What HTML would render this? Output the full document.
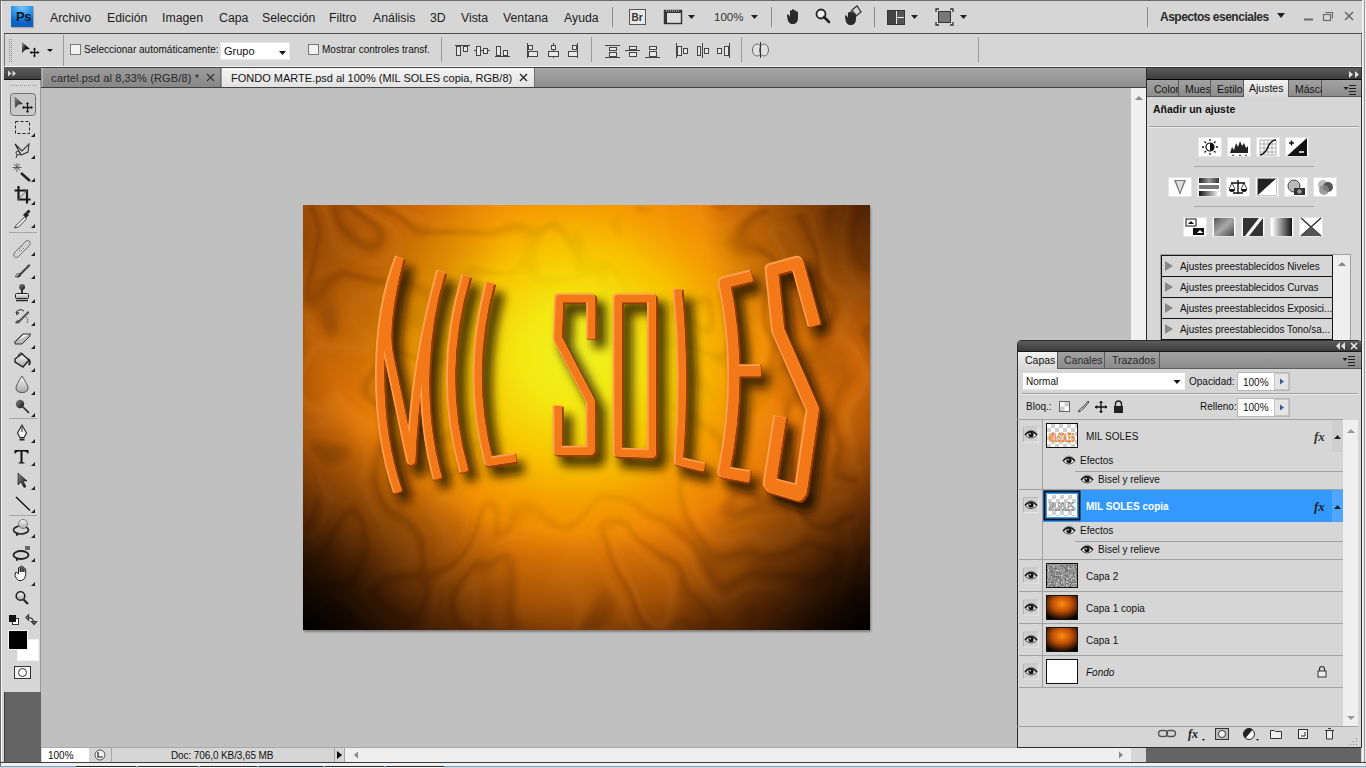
<!DOCTYPE html>
<html><head><meta charset="utf-8">
<style>
*{margin:0;padding:0;box-sizing:border-box}
html,body{width:1366px;height:768px;overflow:hidden;background:#d6d6d6;font-family:"Liberation Sans",sans-serif;color:#111}
.a{position:absolute}
.t{position:absolute;white-space:nowrap}
</style></head><body>
<div class="a" style="left:0;top:0;width:1366px;height:768px;background:#d6d6d6;border-top:1px solid #6c6c6c"></div>

<!-- MENU BAR -->
<div class="a" style="left:11px;top:6px;width:22px;height:21px;background:radial-gradient(ellipse 90% 70% at 50% 10%,#70c4fc,#2a90ec 55%,#0a62c4);box-shadow:1px 1px 1px rgba(90,60,40,.3)"></div>
<div class="t" style="left:16px;top:9px;font-size:13px;line-height:16px;font-weight:bold;color:#1a1418;letter-spacing:-0.5px">Ps</div>
<div class="t" style="left:50px;top:11px;font-size:12.3px;line-height:15px;color:#1e1e1e">Archivo</div>
<div class="t" style="left:107px;top:11px;font-size:12.3px;line-height:15px;color:#1e1e1e">Edición</div>
<div class="t" style="left:162px;top:11px;font-size:12.3px;line-height:15px;color:#1e1e1e">Imagen</div>
<div class="t" style="left:219px;top:11px;font-size:12.3px;line-height:15px;color:#1e1e1e">Capa</div>
<div class="t" style="left:262px;top:11px;font-size:12.3px;line-height:15px;color:#1e1e1e">Selección</div>
<div class="t" style="left:329px;top:11px;font-size:12.3px;line-height:15px;color:#1e1e1e">Filtro</div>
<div class="t" style="left:373px;top:11px;font-size:12.3px;line-height:15px;color:#1e1e1e">Análisis</div>
<div class="t" style="left:430px;top:11px;font-size:12.3px;line-height:15px;color:#1e1e1e">3D</div>
<div class="t" style="left:461px;top:11px;font-size:12.3px;line-height:15px;color:#1e1e1e">Vista</div>
<div class="t" style="left:503px;top:11px;font-size:12.3px;line-height:15px;color:#1e1e1e">Ventana</div>
<div class="t" style="left:564px;top:11px;font-size:12.3px;line-height:15px;color:#1e1e1e">Ayuda</div>

<svg class="a" style="left:600px;top:0" width="766" height="33" viewBox="600 0 766 33">
 <g fill="none" stroke="#8a8a8a"><path d="M612.5,7V27M771.5,7V27M874.5,7V27M1147.5,7V27"/></g>
 <rect x="629.5" y="9.5" width="16" height="15" fill="#e8e8e8" stroke="#555"/>
 <text x="631.5" y="21" font-family="Liberation Sans" font-size="10" font-weight="bold" fill="#333">Br</text>
 <rect x="664.5" y="10.5" width="17" height="13" fill="#ddd" stroke="#333" stroke-width="1.4"/>
 <path d="M664,10h18v3h-18z" fill="#333"/><path d="M664,10v14h3v-14z" fill="#333"/>
 <path d="M666,11h1M668,11h1M670,11h1M672,11h1M674,11h1M676,11h1M678,11h1" stroke="#ddd"/>
 <path d="M688,15h7l-3.5,4z" fill="#222"/>
 <text x="714" y="21" font-family="Liberation Sans" font-size="11.5" fill="#333">100%</text>
 <path d="M751,15h7l-3.5,4z" fill="#222"/>
 <path d="M787,16 q0,-3 2,-1 l1,2 v-6 q1,-2 2,0 v4 v-5 q1,-2 2,0 v5 v-4 q1,-2 2,0 v4 v-3 q1,-1.5 2,0 v6 q0,5 -4,6 h-3 q-2,-1 -3,-3 z" fill="#2a2a2a"/>
 <circle cx="821" cy="14" r="4.5" fill="#eee" stroke="#222" stroke-width="1.8"/>
 <path d="M824,17l5,5" stroke="#222" stroke-width="2.6" stroke-linecap="round"/>
 <path d="M845,17 q0,-3 2,-1 l1,2 v-5 q1,-2 2,0 v3 v-4 q1,-2 2,0 v4 v-3 q1,-2 2,0 v3 v-2 q1,-1.5 2,0 v5 q0,5 -4,6 h-3 q-2,-1 -3,-3 z" fill="#2a2a2a"/>
 <path d="M852,10 l5,-4 l4,6 l-5,4 z" fill="none" stroke="#333" stroke-width="1.2"/>
 <rect x="887.5" y="10.5" width="17" height="14" fill="#eee" stroke="#333"/>
 <rect x="888" y="11" width="8" height="13" fill="#444"/><rect x="897" y="11" width="7" height="6" fill="#555"/><rect x="897" y="18" width="7" height="6" fill="#555"/>
 <path d="M911,15h7l-3.5,4z" fill="#222"/>
 <path d="M936,12v-3h3M950,9h3v3M953,22v3h-3M939,25h-3v-3" fill="none" stroke="#333" stroke-width="1.3"/>
 <rect x="938.5" y="11.5" width="12" height="11" fill="#777" stroke="#333"/>
 <path d="M960,15h7l-3.5,4z" fill="#222"/>
 <path d="M1277,13h8l-4,5z" fill="#222"/>
 <path d="M1304,19.5h9" stroke="#6a6a6a" stroke-width="2"/>
 <rect x="1323.5" y="14.5" width="7" height="6" fill="none" stroke="#6a6a6a" stroke-width="1.2"/><path d="M1325.5,12.5h7v6" fill="none" stroke="#6a6a6a" stroke-width="1.2"/>
 <path d="M1345,12l8,8M1353,12l-8,8" stroke="#6a6a6a" stroke-width="1.6"/>
</svg>
<div class="t" style="left:1160px;top:10px;font-size:12px;line-height:15px;font-weight:bold;color:#2a2a2a;letter-spacing:-0.5px">Aspectos esenciales</div>

<!-- OPTION BAR -->
<div class="a" style="left:4px;top:33px;width:1358px;height:34px;border-top:1px solid #4a4a4a;border-left:1px solid #7a7a7a;border-right:1px solid #7a7a7a;border-bottom:1px solid #f4f4f4;background:#d6d6d6"></div>
<svg class="a" style="left:0;top:33px" width="1366" height="34" viewBox="0 33 1366 34">
 <g fill="#909090"><rect x="9" y="39" width="1" height="1"/><rect x="11" y="39" width="1" height="1"/><rect x="9" y="41" width="1" height="1"/><rect x="11" y="41" width="1" height="1"/><rect x="9" y="43" width="1" height="1"/><rect x="11" y="43" width="1" height="1"/><rect x="9" y="45" width="1" height="1"/><rect x="11" y="45" width="1" height="1"/><rect x="9" y="47" width="1" height="1"/><rect x="11" y="47" width="1" height="1"/><rect x="9" y="49" width="1" height="1"/><rect x="11" y="49" width="1" height="1"/><rect x="9" y="51" width="1" height="1"/><rect x="11" y="51" width="1" height="1"/><rect x="9" y="53" width="1" height="1"/><rect x="11" y="53" width="1" height="1"/><rect x="9" y="55" width="1" height="1"/><rect x="11" y="55" width="1" height="1"/><rect x="9" y="57" width="1" height="1"/><rect x="11" y="57" width="1" height="1"/><rect x="9" y="59" width="1" height="1"/><rect x="11" y="59" width="1" height="1"/><rect x="9" y="61" width="1" height="1"/><rect x="11" y="61" width="1" height="1"/></g>
 <defs><linearGradient id="mvg" x1="0" y1="0" x2="1" y2="0.6"><stop offset="0" stop-color="#999"/><stop offset="0.6" stop-color="#111"/></linearGradient></defs>
 <path d="M22,42 L30,49 L25.5,49.5 L22,53 Z" fill="url(#mvg)"/>
 <path d="M34.5,48.5v8M30.5,52.5h8" stroke="#111" stroke-width="1.3"/>
 <path d="M33,49.5l1.5,-2l1.5,2zM33,55.5l1.5,2l1.5,-2zM31.5,51l-2,1.5l2,1.5zM37.5,51l2,1.5l-2,1.5z" fill="#111"/>
 <path d="M47,49h6l-3,3z" fill="#111"/>
 <path d="M63.5,35V66" stroke="#9a9a9a"/>
 <rect x="70.5" y="44.5" width="10" height="10" fill="#f2f2f2" stroke="#777"/>
 <rect x="308.5" y="44.5" width="10" height="10" fill="#f2f2f2" stroke="#777"/>
 <rect x="220.5" y="42.5" width="69" height="17" fill="#fff" stroke="#e6e6e6"/>
 <path d="M279,51h7l-3.5,4z" fill="#111"/>
 <path d="M441.5,37V62M591.5,37V62M741.5,37V62M978.5,37V62" stroke="#9a9a9a"/>
 <g fill="#e8e8e8" stroke="#444" stroke-width="1">
  <path d="M455,45.5h15" /><rect x="456.5" y="46.5" width="4" height="9"/><rect x="463.5" y="46.5" width="4" height="5"/>
  <path d="M474,50.5h16"/><rect x="476.5" y="46.5" width="4" height="9"/><rect x="483.5" y="48.5" width="4" height="5"/>
  <path d="M495,56.5h15"/><rect x="496.5" y="46.5" width="4" height="9"/><rect x="503.5" y="50.5" width="4" height="5"/>
  <path d="M527.5,43v15"/><rect x="528.5" y="45.5" width="4" height="4"/><rect x="528.5" y="51.5" width="9" height="5"/>
  <path d="M553.5,43v15"/><rect x="551.5" y="45.5" width="4" height="4"/><rect x="548.5" y="51.5" width="10" height="5"/>
  <path d="M577.5,43v15"/><rect x="572.5" y="45.5" width="4" height="4"/><rect x="568.5" y="51.5" width="9" height="5"/>
  <path d="M605,45.5h15M605,57.5h15"/><rect x="609.5" y="47.5" width="7" height="3"/><rect x="609.5" y="52.5" width="7" height="4"/>
  <path d="M625,50.5h15"/><rect x="629.5" y="46.5" width="7" height="3"/><rect x="629.5" y="52.5" width="7" height="4"/>
  <path d="M645,57.5h15"/><rect x="649.5" y="46.5" width="7" height="3"/><rect x="649.5" y="51.5" width="7" height="5"/>
  <path d="M676.5,43v15"/><rect x="677.5" y="46.5" width="4" height="9"/><rect x="683.5" y="48.5" width="4" height="5"/>
  <path d="M702.5,43v15"/><rect x="697.5" y="46.5" width="3" height="9"/><rect x="704.5" y="48.5" width="4" height="5"/>
  <path d="M729.5,43v15"/><rect x="724.5" y="46.5" width="4" height="9"/><rect x="717.5" y="48.5" width="4" height="5"/>
 </g>
 <g fill="#e0e0e0" stroke="#666"><ellipse cx="757" cy="50" rx="4.5" ry="6"/><ellipse cx="764" cy="50" rx="4.5" ry="6"/><path d="M760.5,42v16" stroke="#333"/></g>
</svg>
<div class="t" style="left:84px;top:43px;font-size:10px;line-height:13px;color:#111">Seleccionar automáticamente:</div>
<div class="t" style="left:224px;top:45px;font-size:11px;line-height:13px;color:#111">Grupo</div>
<div class="t" style="left:322px;top:43px;font-size:10px;line-height:13px;color:#111">Mostrar controles transf.</div>

<!-- TOOL PANEL -->
<div class="a" style="left:4px;top:67px;width:37px;height:625px;background:#d6d6d6;border-right:1px solid #9a9a9a"></div>
<div class="a" style="left:4px;top:67px;width:37px;height:13px;background:linear-gradient(#5e5e5e,#3e3e3e);border-bottom:1px solid #111"></div>
<div class="a" style="left:4px;top:692px;width:37px;height:70px;background:#646464;border-left:1px solid #3c3c3c"></div>
<svg class="a" style="left:0;top:67px" width="44" height="625" viewBox="0 67 44 625">
 <defs>
  <linearGradient id="tg" x1="0" y1="0" x2="0" y2="1"><stop offset="0" stop-color="#f8f8f8"/><stop offset="1" stop-color="#a8a8a8"/></linearGradient>
  <linearGradient id="tgd" x1="0" y1="0" x2="1" y2="1"><stop offset="0" stop-color="#888"/><stop offset="1" stop-color="#111"/></linearGradient>
 </defs>
 <path d="M8,70.5l3.5,3l-3.5,3zM12.5,70.5l3.5,3l-3.5,3z" fill="#d8d8d8"/>
 <g fill="#9a9a9a"><rect x="10" y="85" width="1" height="1"/><rect x="12" y="85" width="1" height="1"/><rect x="14" y="85" width="1" height="1"/><rect x="16" y="85" width="1" height="1"/><rect x="18" y="85" width="1" height="1"/><rect x="20" y="85" width="1" height="1"/><rect x="22" y="85" width="1" height="1"/><rect x="24" y="85" width="1" height="1"/><rect x="26" y="85" width="1" height="1"/><rect x="28" y="85" width="1" height="1"/><rect x="30" y="85" width="1" height="1"/><rect x="32" y="85" width="1" height="1"/><rect x="34" y="85" width="1" height="1"/><rect x="36" y="85" width="1" height="1"/></g>
 <rect x="10.5" y="93.5" width="25" height="22" rx="3" fill="#c8c8c8" stroke="#707070"/>
 <path d="M14.5,96.5 L23,104 L18.5,104.5 L15,108 Z" fill="url(#tgd)"/>
 <path d="M27.5,103v9M23,107.5h9" stroke="#111" stroke-width="1.3"/>
 <path d="M26,104l1.5,-2l1.5,2zM26,111l1.5,2l1.5,-2zM24,106l-2,1.5l2,1.5zM31,106l2,1.5l-2,1.5z" fill="#111"/>
 <rect x="15.5" y="121.5" width="14" height="12" fill="none" stroke="#222" stroke-dasharray="3,2"/><path d="M31,137h4v-4z" fill="#222"/>
 <path d="M15,144 l7,7 l7,-7 l-1,8 l-7,3 z" fill="none" stroke="#333" stroke-width="1.1"/><circle cx="18" cy="153" r="2" fill="none" stroke="#333"/><path d="M17,155 l-1,3" stroke="#333"/><path d="M31,159h4v-4z" fill="#222"/>
 <path d="M21,173 l9,8" stroke="#222" stroke-width="2.4"/><path d="M17,163v9M12.5,167.5h9M14,164l6,6M20,164l-6,6" stroke="#555" stroke-width="0.9"/><path d="M31,182h4v-4z" fill="#222"/>
 <path d="M18.5,186v13.5h12M14.5,190.5h12.5v13" fill="none" stroke="#1a1a1a" stroke-width="2.2"/><path d="M18,200l10,-11" stroke="#666"/><path d="M31,205h4v-4z" fill="#222"/>
 <path d="M14.5,228 l2,-3 l8,-8 l2,2 l-8,8z" fill="#f0f0f0" stroke="#444" stroke-width="1"/><path d="M23,215 l3,3 l3,-3 l-3,-3z" fill="#222"/><path d="M26,212l2.5,-2.5l2,2l-2.5,2.5z" fill="#222"/><path d="M31,228h4v-4z" fill="#222"/>
 <path d="M9,232.5h28M9,418.5h28M9,515.5h28" stroke="#a6a6a6"/>
 <path d="M15,252 l11,-11 q3,-2 4,1 q1,2 -1,4 l-11,11 q-3,2 -4,-1 q-1,-2 1,-4z" fill="#d0d0d0" stroke="#777" stroke-width="1"/><path d="M19,248l1,1M21,246l1,1M19,250l1,1M23,248l1,1M21,250l1,1" stroke="#888"/><path d="M31,256h4v-4z" fill="#222"/>
 <path d="M15,277 q1,-4 5,-4 l9,-9 l1.5,1.5 l-9,9 q-1,4 -6.5,2.5z" fill="#444"/><path d="M16,276 q2,-1 3,-2" stroke="#ddd"/><path d="M31,279h4v-4z" fill="#222"/>
 <circle cx="22" cy="287" r="3" fill="url(#tgd)"/><path d="M22,289v4" stroke="#333" stroke-width="2"/><rect x="15.5" y="293.5" width="13" height="5" rx="1" fill="url(#tg)" stroke="#222"/><path d="M16,300.5h12" stroke="#222" stroke-width="1.5"/><path d="M31,303h4v-4z" fill="#222"/>
 <path d="M15,323 q1,-3 4,-3 l9,-9 l1.5,1.5 l-9,9 q-1,3 -5.5,1.5z" fill="#555"/><path d="M16,312 q4,-4 8,-1 M16,312 l1,3 l2,-2z" fill="none" stroke="#333" stroke-width="1"/><path d="M26,317 q3,3 1,6" stroke="#333" stroke-dasharray="1.5,1" fill="none"/><path d="M31,326h4v-4z" fill="#222"/>
 <path d="M15,342 l8,-8 h7 l-8,8z" fill="#f4f4f4" stroke="#333" stroke-width="1.1"/><path d="M15,342 v2 h7 l8,-8 v-2" fill="#bbb" stroke="#333" stroke-width="1"/><path d="M31,349h4v-4z" fill="#222"/>
 <path d="M15,359 l7,-5 l7,6 l-6,7 l-8,-5z" fill="url(#tg)" stroke="#222" stroke-width="1.4"/><path d="M18,356 q2,-5 5,-2" fill="none" stroke="#222"/><path d="M28,359 q3,2 1,6" stroke="#222" stroke-width="2" fill="none"/><path d="M31,372h4v-4z" fill="#222"/>
 <path d="M22,376 q-6,9 -6,12 q0,4.5 6,4.5 q6,0 6,-4.5 q0,-3 -6,-12z" fill="url(#tg)" stroke="#555" stroke-width="1"/><path d="M31,395h4v-4z" fill="#222"/>
 <circle cx="20" cy="404" r="4.2" fill="url(#tgd)"/><path d="M23,407 l6,6" stroke="#222" stroke-width="1.6"/><path d="M31,417h4v-4z" fill="#222"/>
 <path d="M22,425 l-4.5,8 l2.5,4.5 h4 l2.5,-4.5z" fill="#f4f4f4" stroke="#222" stroke-width="1.1"/><path d="M22,427v5" stroke="#222"/><path d="M19.5,439.5h5" stroke="#222" stroke-width="2"/><path d="M31,443h4v-4z" fill="#222"/>
 <path d="M14.5,450h14v3.5h-1q-1,-2 -3,-2h-2v10.5l2,0.8v0.7h-6v-0.7l2,-0.8v-10.5h-2q-2,0 -3,2h-1z" fill="#111"/><path d="M31,466h4v-4z" fill="#222"/>
 <path d="M18,473 l0,12 l3,-3 l3,5.5 l2,-1 l-3,-5.5 l4,0z" fill="url(#tgd)" stroke="#111" stroke-width="0.6"/><path d="M31,490h4v-4z" fill="#222"/>
 <path d="M16,497 l14,13.5" stroke="#111" stroke-width="1.4"/><path d="M31,513h4v-4z" fill="#222"/>
 <ellipse cx="21" cy="530" rx="7.5" ry="4" fill="none" stroke="#222" stroke-width="1.6"/><circle cx="23" cy="524" r="4.5" fill="url(#tg)" stroke="#666" stroke-width="0.8"/><path d="M16,533l3,2l-3,1z" fill="#222"/><path d="M31,538h4v-4z" fill="#222"/>
 <ellipse cx="21" cy="555" rx="7.5" ry="4" fill="none" stroke="#222" stroke-width="1.8"/><rect x="25" y="546" width="5" height="4" fill="#666"/><path d="M16,558l3,2l-3,1z" fill="#222"/><path d="M31,562h4v-4z" fill="#222"/>
 <path d="M15.5,575 q-1,-3 1,-3 l2,2 v-6 q0.5,-1.5 1.8,0 v4 v-5.5 q0.6,-1.5 1.8,0 v5.5 v-4.5 q0.6,-1.5 1.8,0 v4.5 v-3 q0.6,-1.3 1.8,0 v5.5 q0,5 -4,6 h-3 q-2,-1 -4,-5 z" fill="#f8f8f8" stroke="#222" stroke-width="1"/><path d="M31,586h4v-4z" fill="#222"/>
 <circle cx="20.5" cy="596" r="4.3" fill="url(#tg)" stroke="#222" stroke-width="1.6"/><path d="M23.5,599.5l4.5,4.5" stroke="#222" stroke-width="2.2"/>
 <rect x="12.5" y="618.5" width="6" height="6" fill="#fff" stroke="#333"/><rect x="9" y="615" width="7" height="7" fill="#111"/>
 <path d="M28,617.5 q5,0 6,5 M26,617.5 l2.5,-2.5 v5z M36.5,621.5 l-2.5,3 l-2.5,-3z" fill="none" stroke="#333" stroke-width="1.2"/>
 <rect x="17.5" y="639.5" width="21" height="21" fill="#fff" stroke="#f0f0f0"/>
 <rect x="8.5" y="630.5" width="19" height="19" fill="#000" stroke="#f4f4f4"/>
 <rect x="14.5" y="666.5" width="16" height="12" fill="#f4f4f4" stroke="#333"/><circle cx="22.5" cy="672.5" r="4" fill="#fff" stroke="#333"/>
</svg>

<!-- TAB BAR -->
<div class="a" style="left:41px;top:67px;width:1106px;height:21px;background:linear-gradient(#a6a6a6,#8e8e8e);border-top:1px solid #404040;border-bottom:1px solid #404040"></div>
<div class="a" style="left:42px;top:68px;width:179px;height:19px;background:linear-gradient(#9c9c9c,#878787);border-right:1px solid #707070;border-left:1px solid #b0b0b0"></div>
<div class="t" style="left:51px;top:72px;font-size:11px;line-height:13px;color:#262626;letter-spacing:0.13px">cartel.psd al 8,33% (RGB/8) *</div>
<svg class="a" style="left:205px;top:72px" width="12" height="12"><path d="M2,2l7,7M9,2l-7,7" stroke="#333" stroke-width="1.1"/></svg>
<div class="a" style="left:222px;top:68px;width:313px;height:19px;background:linear-gradient(#f4f4f4,#e2e2e2);border-right:1px solid #707070"></div>
<div class="t" style="left:231px;top:72px;font-size:11px;line-height:13px;color:#111">FONDO MARTE.psd al 100% (MIL SOLES copia, RGB/8)</div>
<svg class="a" style="left:518px;top:72px" width="12" height="12"><path d="M2,2l7,7M9,2l-7,7" stroke="#222" stroke-width="1.3"/></svg>

<!-- CANVAS -->
<div class="a" style="left:41px;top:88px;width:1090px;height:659px;background:#c0c0c0"></div>
<div class="a" style="left:1131px;top:88px;width:16px;height:659px;background:#f0f0f0;border-right:1px solid #3c3c3c"></div>
<svg class="a" style="left:1131px;top:88px" width="16" height="20"><path d="M4,12h8l-4,-4z" fill="#888"/></svg>

<!-- IMAGE -->
<div class="a" style="left:303px;top:205px;width:567px;height:425px;box-shadow:1px 2px 2px rgba(0,0,0,.35)"></div>
<svg class="a" style="left:303px;top:205px" width="567" height="425" viewBox="0 0 567 425">
<defs>
<radialGradient id="g1" gradientUnits="userSpaceOnUse" cx="272" cy="150" r="300" gradientTransform="translate(272 150) scale(1.12 1.05) translate(-272 -150)">
<stop offset="0" stop-color="#f0f020"/>
<stop offset="0.16" stop-color="#f4e810"/>
<stop offset="0.34" stop-color="#f8c400"/>
<stop offset="0.48" stop-color="#f49c00"/>
<stop offset="0.65" stop-color="#ea7c06"/>
<stop offset="0.85" stop-color="#d86c08"/>
<stop offset="1" stop-color="#c86008"/>
</radialGradient>
<radialGradient id="g2" gradientUnits="userSpaceOnUse" cx="283" cy="40" r="480">
<stop offset="0" stop-color="#000" stop-opacity="0"/>
<stop offset="0.6" stop-color="#000" stop-opacity="0"/>
<stop offset="0.75" stop-color="#140600" stop-opacity="0.28"/>
<stop offset="0.87" stop-color="#080000" stop-opacity="0.62"/>
<stop offset="1" stop-color="#000" stop-opacity="1"/>
</radialGradient>
<radialGradient id="mg" gradientUnits="userSpaceOnUse" cx="268" cy="170" r="330">
<stop offset="0.25" stop-color="#fff" stop-opacity="0"/>
<stop offset="0.7" stop-color="#fff" stop-opacity="1"/>
</radialGradient>
<radialGradient id="g3" gradientUnits="userSpaceOnUse" cx="567" cy="0" r="170">
<stop offset="0" stop-color="#1a0800" stop-opacity="0.7"/>
<stop offset="1" stop-color="#1a0800" stop-opacity="0"/>
</radialGradient>
<radialGradient id="g4" gradientUnits="userSpaceOnUse" cx="0" cy="40" r="200">
<stop offset="0" stop-color="#1a0800" stop-opacity="0.35"/>
<stop offset="1" stop-color="#1a0800" stop-opacity="0"/>
</radialGradient>
<radialGradient id="g5" gradientUnits="userSpaceOnUse" cx="0" cy="425" r="220">
<stop offset="0" stop-color="#000" stop-opacity="0.8"/>
<stop offset="0.5" stop-color="#0a0200" stop-opacity="0.32"/>
<stop offset="1" stop-color="#0a0200" stop-opacity="0"/>
</radialGradient>
<radialGradient id="g6" gradientUnits="userSpaceOnUse" cx="567" cy="425" r="200">
<stop offset="0" stop-color="#000" stop-opacity="0.8"/>
<stop offset="0.5" stop-color="#0a0200" stop-opacity="0.32"/>
<stop offset="1" stop-color="#0a0200" stop-opacity="0"/>
</radialGradient>
<mask id="mm"><rect width="567" height="425" fill="url(#mg)"/></mask>
<filter id="marble" x="0" y="0" width="100%" height="100%" color-interpolation-filters="sRGB">
<feTurbulence type="fractalNoise" baseFrequency="0.011 0.009" numOctaves="2" seed="5" result="n"/>
<feDisplacementMap in="n" in2="n" scale="70" xChannelSelector="G" yChannelSelector="B" result="d"/>
<feComponentTransfer in="d" result="b">
<feFuncR type="table" tableValues="0 1 0 0 0 0 1 0 0 0 0 1 0 0 0 0 1 0 0 0 0 1 0"/>
</feComponentTransfer>
<feColorMatrix in="b" type="matrix" values="0 0 0 0 1  0 0 0 0 0.62  0 0 0 0 0.2  1 0 0 0 0"/>
<feGaussianBlur stdDeviation="0.7"/>
</filter>
<filter id="marble2" x="0" y="0" width="100%" height="100%" color-interpolation-filters="sRGB">
<feTurbulence type="fractalNoise" baseFrequency="0.011 0.009" numOctaves="2" seed="5" result="n"/>
<feDisplacementMap in="n" in2="n" scale="70" xChannelSelector="G" yChannelSelector="B" result="d"/>
<feComponentTransfer in="d" result="b">
<feFuncR type="table" tableValues="0 0 0 1 0 0 0 0 1 0 0 0 0 1 0 0 0 0 1 0 0 0 0"/>
</feComponentTransfer>
<feColorMatrix in="b" type="matrix" values="0 0 0 0 0.25  0 0 0 0 0.1  0 0 0 0 0  1 0 0 0 0"/>
<feGaussianBlur stdDeviation="1.5"/>
</filter>
<filter id="sh" x="-20%" y="-20%" width="140%" height="140%"><feGaussianBlur stdDeviation="5"/></filter>
</defs>
<rect width="567" height="425" fill="url(#g1)"/><g mask="url(#mm)"><rect width="567" height="425" filter="url(#marble2)" opacity="0.22"/><rect width="567" height="425" filter="url(#marble)" opacity="0.2"/></g><rect width="567" height="425" fill="url(#g2)"/><rect width="567" height="425" fill="url(#g3)"/><rect width="567" height="425" fill="url(#g4)"/><rect width="567" height="425" fill="url(#g5)"/><rect width="567" height="425" fill="url(#g6)"/>
<g id="letters" fill="none" stroke-linecap="butt" stroke-linejoin="round">
<g transform="translate(8,9)" stroke="#201000" stroke-opacity="0.8" filter="url(#sh)">
 <path stroke-width="13" d="M95.2,287.4 C72,220 70,120 97,53 M97,53 Q80,120 86,150 L108.5,256 L108.5,256 Q112,160 138.4,67 M138.4,67 C122,120 114,200 135,274"/>
 <path stroke-width="13" d="M163.5,71 Q134,170 161.5,267"/>
 <path stroke-width="13" d="M187.5,78 Q163,168 186,257 L213,253"/>
 <path stroke-width="13" d="M288.5,133.9 L288.5,93.5 L256.5,93.5 L255,134 L288,196.8 L288,246 L255,246 L255,201"/>
 <path stroke-width="13" d="M315,93.5 L349.3,93.5 L349.3,249 L315,247.7 Z"/>
 <path stroke-width="13" d="M374.8,84.5 Q383,170 376,256.7 L401.7,262.7"/>
 <path stroke-width="16" d="M449,71 L421.5,78 Q441,170 421,267.5 L447,272 M431.6,166 L458,166"/>
 <path stroke-width="17" d="M511.8,120.7 L494.5,58 L469,65 L475.4,126 L510,205 L498,287 L467,279 L477.5,212"/>
 <path stroke-width="17" d="M469,282 L496,290" stroke-linecap="round"/>
</g>
<g stroke="#9a3c00" transform="translate(0.8,0.8)">
 <path stroke-width="10" d="M95.2,287.4 C72,220 70,120 97,53 M97,53 Q80,120 86,150 L108.5,256 L108.5,256 Q112,160 138.4,67 M138.4,67 C122,120 114,200 135,274"/>
 <path stroke-width="10" d="M163.5,71 Q134,170 161.5,267"/>
 <path stroke-width="10" d="M187.5,78 Q163,168 186,257 L213,253"/>
 <path stroke-width="10" d="M288.5,133.9 L288.5,93.5 L256.5,93.5 L255,134 L288,196.8 L288,246 L255,246 L255,201"/>
 <path stroke-width="10" d="M315,93.5 L349.3,93.5 L349.3,249 L315,247.7 Z"/>
 <path stroke-width="10" d="M374.8,84.5 Q383,170 376,256.7 L401.7,262.7"/>
 <path stroke-width="13" d="M449,71 L421.5,78 Q441,170 421,267.5 L447,272 M431.6,166 L458,166"/>
 <path stroke-width="14" d="M511.8,120.7 L494.5,58 L469,65 L475.4,126 L510,205 L498,287 L467,279 L477.5,212"/>
 <path stroke-width="14" d="M469,282 L496,290" stroke-linecap="round"/>
</g>
<g stroke="#ffa050" transform="translate(-0.8,-0.8)">
 <path stroke-width="9" d="M95.2,287.4 C72,220 70,120 97,53 M97,53 Q80,120 86,150 L108.5,256 L108.5,256 Q112,160 138.4,67 M138.4,67 C122,120 114,200 135,274"/>
 <path stroke-width="9" d="M163.5,71 Q134,170 161.5,267"/>
 <path stroke-width="9" d="M187.5,78 Q163,168 186,257 L213,253"/>
 <path stroke-width="9" d="M288.5,133.9 L288.5,93.5 L256.5,93.5 L255,134 L288,196.8 L288,246 L255,246 L255,201"/>
 <path stroke-width="9" d="M315,93.5 L349.3,93.5 L349.3,249 L315,247.7 Z"/>
 <path stroke-width="9" d="M374.8,84.5 Q383,170 376,256.7 L401.7,262.7"/>
 <path stroke-width="12" d="M449,71 L421.5,78 Q441,170 421,267.5 L447,272 M431.6,166 L458,166"/>
 <path stroke-width="13" d="M511.8,120.7 L494.5,58 L469,65 L475.4,126 L510,205 L498,287 L467,279 L477.5,212"/>
 <path stroke-width="13" d="M469,282 L496,290" stroke-linecap="round"/>
</g>
<g stroke="#f27818">
 <path stroke-width="7" d="M95.2,287.4 C72,220 70,120 97,53 M97,53 Q80,120 86,150 L108.5,256 L108.5,256 Q112,160 138.4,67 M138.4,67 C122,120 114,200 135,274"/>
 <path stroke-width="7" d="M163.5,71 Q134,170 161.5,267"/>
 <path stroke-width="7" d="M187.5,78 Q163,168 186,257 L213,253"/>
 <path stroke-width="7" d="M288.5,133.9 L288.5,93.5 L256.5,93.5 L255,134 L288,196.8 L288,246 L255,246 L255,201"/>
 <path stroke-width="7" d="M315,93.5 L349.3,93.5 L349.3,249 L315,247.7 Z"/>
 <path stroke-width="7" d="M374.8,84.5 Q383,170 376,256.7 L401.7,262.7"/>
 <path stroke-width="10" d="M449,71 L421.5,78 Q441,170 421,267.5 L447,272 M431.6,166 L458,166"/>
 <path stroke-width="11" d="M511.8,120.7 L494.5,58 L469,65 L475.4,126 L510,205 L498,287 L467,279 L477.5,212"/>
 <path stroke-width="11" d="M469,282 L496,290" stroke-linecap="round"/>
</g>
</g>
</svg>

<!-- STATUS BAR -->
<div class="a" style="left:41px;top:747px;width:1105px;height:15px;background:#d6d6d6;border-top:1px solid #a8a8a8"></div>
<div class="a" style="left:42px;top:748px;width:47px;height:14px;background:#fff"></div>
<div class="t" style="left:48px;top:750px;font-size:10px;line-height:12px">100%</div>
<svg class="a" style="left:89px;top:748px" width="260" height="14">
 <path d="M22.5,0v14" stroke="#a8a8a8"/>
 <circle cx="11" cy="7" r="5" fill="#eee" stroke="#555"/><path d="M9,4v5h5" fill="none" stroke="#222" stroke-width="1.2"/>
 <path d="M245.5,0v14" stroke="#a8a8a8"/>
 <path d="M248,3v8l5,-4z" fill="#000"/>
 <path d="M255.5,0v14" stroke="#a8a8a8"/>
</svg>
<div class="t" style="left:171px;top:750px;font-size:10px;line-height:12px;letter-spacing:-0.1px">Doc: 706,0 KB/3,65 MB</div>
<div class="a" style="left:345px;top:748px;width:786px;height:14px;background:#efefef"></div>
<svg class="a" style="left:345px;top:748px" width="786" height="14"><path d="M13,3.5v7l-4,-3.5z" fill="#888"/><path d="M774,3.5v7l4,-3.5z" fill="#888"/></svg>
<div class="a" style="left:1131px;top:748px;width:15px;height:14px;background:#d6d6d6"></div>
<div class="a" style="left:1146px;top:747px;width:215px;height:15px;background:#646464"></div>

<!-- RIGHT PANEL (Ajustes) -->
<div class="a" style="left:1146px;top:67px;width:216px;height:280px;background:#d6d6d6;border-left:1px solid #2c2c2c;border-right:1px solid #2c2c2c"></div>
<div class="a" style="left:1147px;top:67px;width:214px;height:13px;background:linear-gradient(#5c5c5c,#3c3c3c);border-top:1px solid #303030;border-bottom:1px solid #000"></div>
<svg class="a" style="left:1345px;top:68px" width="18" height="12"><path d="M4,3l4,3.5l-4,3.5zM10,3l4,3.5l-4,3.5z" fill="#e0e0e0"/></svg>
<div class="a" style="left:1147px;top:80px;width:214px;height:17px;background:linear-gradient(#a2a2a2,#8c8c8c);border-bottom:1px solid #5c5c5c"></div>
<div class="a" style="left:1178px;top:80px;width:1px;height:17px;background:#5a5a5a"></div>
<div class="a" style="left:1210px;top:80px;width:1px;height:17px;background:#5a5a5a"></div>
<div class="a" style="left:1243px;top:80px;width:1px;height:17px;background:#5a5a5a"></div>
<div class="a" style="left:1288px;top:80px;width:1px;height:17px;background:#5a5a5a"></div>
<div class="a" style="left:1321px;top:80px;width:1px;height:17px;background:#5a5a5a"></div>
<div class="a" style="left:1244px;top:80px;width:44px;height:18px;background:linear-gradient(#f2f2f2,#d6d6d6)"></div>
<div class="t" style="left:1154px;top:83px;font-size:10.5px;line-height:13px;color:#161616;width:24px;overflow:hidden">Color</div>
<div class="t" style="left:1185px;top:83px;font-size:10.5px;line-height:13px;color:#161616;width:25px;overflow:hidden">Muestras</div>
<div class="t" style="left:1217px;top:83px;font-size:10.5px;line-height:13px;color:#161616;width:26px;overflow:hidden">Estilos</div>
<div class="t" style="left:1249px;top:82px;font-size:10.5px;line-height:13px;color:#111">Ajustes</div>
<div class="t" style="left:1295px;top:83px;font-size:10.5px;line-height:13px;color:#161616;width:27px;overflow:hidden">Máscaras</div>
<svg class="a" style="left:1343px;top:81px" width="20" height="16"><path d="M0.5,6h5l-2.5,3z" fill="#222"/><path d="M6,4.5h7M6,7.5h7M6,10.5h7M6,13.5h7" stroke="#222" stroke-width="1.2"/></svg>
<div class="t" style="left:1153px;top:103px;font-size:10.5px;line-height:13px;font-weight:bold;color:#111">Añadir un ajuste</div>
<div class="a" style="left:1149px;top:126px;width:210px;height:2px;background:#a0a0a0;border-bottom:1px solid #ececec"></div>
<div class="a" style="left:1194px;top:166px;width:120px;height:1px;background:#a8a8a8"></div>
<div class="a" style="left:1194px;top:206px;width:120px;height:1px;background:#a8a8a8"></div>
<svg class="a" style="left:0;top:0" width="1366" height="340" viewBox="0 0 1366 340"><g transform="translate(1198,137)"><rect x="0.5" y="0.5" width="23" height="19" fill="#fff" stroke="#e4e4e4"/><g transform="translate(1,0)"><circle cx="11" cy="10" r="4" fill="#fff" stroke="#111" stroke-width="1.2"/><path d="M11,6v8a4,4 0 0 0 0,-8z" fill="#111"/><path d="M11,2v2M11,16v2M3,10h2M17,10h2M5.5,4.5l1.5,1.5M15,14l1.5,1.5M5.5,15.5l1.5,-1.5M15,6l1.5,-1.5" stroke="#111" stroke-width="1.3"/></g></g><g transform="translate(1227,137)"><rect x="0.5" y="0.5" width="23" height="19" fill="#fff" stroke="#e4e4e4"/><g transform="translate(1,0)"><path d="M2,16 l2,-6 l2,3 l2,-7 l2,4 l2,-6 l2,5 l2,-3 l2,5 l2,-2 v7z" fill="#222"/><path d="M4,19l1,-2l1,2zM11,19l1,-2l1,2zM17,19l1,-2l1,2z" fill="#333"/></g></g><g transform="translate(1256,137)"><rect x="0.5" y="0.5" width="23" height="19" fill="#fff" stroke="#e4e4e4"/><g transform="translate(1,0)"><path d="M3,3h16v15h-16z M7,3v15M11,3v15M15,3v15M3,7h16M3,11h16M3,15h16" fill="none" stroke="#999" stroke-width="0.8"/><path d="M3,18 q5,-1 8,-8 q3,-7 8,-7" fill="none" stroke="#111" stroke-width="1.5"/></g></g><g transform="translate(1285,137)"><rect x="0.5" y="0.5" width="23" height="19" fill="#fff" stroke="#e4e4e4"/><g transform="translate(1,0)"><path d="M1,19 L21,1 V19Z" fill="#111"/><path d="M3,6h5M5.5,3.5v5" stroke="#111" stroke-width="1.5"/><path d="M13,15h5" stroke="#fff" stroke-width="1.5"/></g></g><g transform="translate(1168,177)"><rect x="0.5" y="0.5" width="23" height="19" fill="#fff" stroke="#e4e4e4"/><g transform="translate(1,0)"><path d="M5,3 L17,3 L11,18z" fill="#777"/><path d="M7,4 L15,4 L11,15z" fill="#ddd"/></g></g><g transform="translate(1197,177)"><rect x="0.5" y="0.5" width="23" height="19" fill="#fff" stroke="#e4e4e4"/><g transform="translate(1,0)"><defs><linearGradient id="gb1"><stop offset="0" stop-color="#222"/><stop offset=".5" stop-color="#999"/><stop offset="1" stop-color="#333"/></linearGradient><linearGradient id="gb2"><stop offset="0" stop-color="#111"/><stop offset="1" stop-color="#fff"/></linearGradient></defs><rect x="1" y="1" width="20" height="5" fill="url(#gb1)"/><rect x="1" y="8" width="20" height="4" fill="#777"/><rect x="1" y="14" width="20" height="5" fill="url(#gb2)"/></g></g><g transform="translate(1226,177)"><rect x="0.5" y="0.5" width="23" height="19" fill="#fff" stroke="#e4e4e4"/><g transform="translate(1,0)"><path d="M11,3v14M4,6h14M6,16h10" stroke="#111" stroke-width="1.4"/><path d="M2,12a3,3 0 0 0 6,0zM14,12a3,3 0 0 0 6,0z" fill="#111"/><path d="M5,6l-3,6M5,6l3,6M17,6l-3,6M17,6l3,6" stroke="#111" stroke-width="0.8"/></g></g><g transform="translate(1255,177)"><rect x="0.5" y="0.5" width="23" height="19" fill="#fff" stroke="#e4e4e4"/><g transform="translate(1,0)"><path d="M1,1 H21 L1,19z" fill="#222"/><path d="M21,1 V19 H1z" fill="#fff"/><rect x="1.5" y="1.5" width="19" height="17" fill="none" stroke="#bbb" stroke-width="0.8"/></g></g><g transform="translate(1284,177)"><rect x="0.5" y="0.5" width="23" height="19" fill="#fff" stroke="#e4e4e4"/><g transform="translate(1,0)"><circle cx="9" cy="9" r="6" fill="#bbb" stroke="#444"/><rect x="9" y="11" width="11" height="7" fill="#333"/><circle cx="14.5" cy="14.5" r="2.3" fill="#999"/></g></g><g transform="translate(1313,177)"><rect x="0.5" y="0.5" width="23" height="19" fill="#fff" stroke="#e4e4e4"/><g transform="translate(1,0)"><circle cx="9" cy="8" r="5" fill="#bbb"/><circle cx="14" cy="10" r="5" fill="#555"/><circle cx="10" cy="13" r="5" fill="#888" fill-opacity=".8"/></g></g><g transform="translate(1183,217)"><rect x="0.5" y="0.5" width="23" height="19" fill="#fff" stroke="#e4e4e4"/><g transform="translate(1,0)"><rect x="2" y="2" width="10" height="7" fill="#fff" stroke="#111"/><path d="M4,7l3,-3l3,3z" fill="#111"/><rect x="9" y="11" width="11" height="7" fill="#111"/><path d="M13,16l3,-3l3,3z" fill="#fff"/></g></g><g transform="translate(1212,217)"><rect x="0.5" y="0.5" width="23" height="19" fill="#fff" stroke="#e4e4e4"/><g transform="translate(1,0)"><defs><linearGradient id="gd1" x1="0" y1="0" x2="1" y2="1"><stop offset="0" stop-color="#555"/><stop offset=".5" stop-color="#aaa"/><stop offset="1" stop-color="#444"/></linearGradient></defs><rect x="1" y="1" width="20" height="18" fill="url(#gd1)"/></g></g><g transform="translate(1241,217)"><rect x="0.5" y="0.5" width="23" height="19" fill="#fff" stroke="#e4e4e4"/><g transform="translate(1,0)"><rect x="1" y="1" width="20" height="18" fill="#333"/><path d="M3,19 L17,1 H21 L7,19z" fill="#fff"/></g></g><g transform="translate(1270,217)"><rect x="0.5" y="0.5" width="23" height="19" fill="#fff" stroke="#e4e4e4"/><g transform="translate(1,0)"><defs><linearGradient id="gd2"><stop offset="0" stop-color="#fff"/><stop offset="1" stop-color="#111"/></linearGradient></defs><rect x="1" y="1" width="20" height="18" fill="url(#gd2)"/></g></g><g transform="translate(1299,217)"><rect x="0.5" y="0.5" width="23" height="19" fill="#fff" stroke="#e4e4e4"/><g transform="translate(1,0)"><path d="M1,1 L21,19 M21,1 L1,19" stroke="#333" stroke-width="1.5"/><path d="M1,19 L11,10 L21,19z" fill="#555"/></g></g>
 <rect x="1160.5" y="254.5" width="190" height="90" fill="#d6d6d6" stroke="#a0a0a0"/>
 <rect x="1333" y="255" width="17" height="88" fill="#efefef"/>
 <path d="M1338,266h8l-4,-4z" fill="#888"/>
</svg>
<div class="a" style="left:1161px;top:255px;width:172px;height:22px;border:1px solid #141414;background:#d6d6d6"></div>
<svg class="a" style="left:1164px;top:260px" width="10" height="12"><path d="M1,1v10l8,-5z" fill="#888"/></svg>
<div class="t" style="left:1180px;top:261px;font-size:10px;line-height:12px;color:#111;letter-spacing:-0.05px">Ajustes preestablecidos Niveles</div>
<div class="a" style="left:1161px;top:276px;width:172px;height:22px;border:1px solid #141414;background:#d6d6d6"></div>
<svg class="a" style="left:1164px;top:281px" width="10" height="12"><path d="M1,1v10l8,-5z" fill="#888"/></svg>
<div class="t" style="left:1180px;top:282px;font-size:10px;line-height:12px;color:#111;letter-spacing:-0.05px">Ajustes preestablecidos Curvas</div>
<div class="a" style="left:1161px;top:297px;width:172px;height:22px;border:1px solid #141414;background:#d6d6d6"></div>
<svg class="a" style="left:1164px;top:302px" width="10" height="12"><path d="M1,1v10l8,-5z" fill="#888"/></svg>
<div class="t" style="left:1180px;top:303px;font-size:10px;line-height:12px;color:#111;letter-spacing:-0.05px">Ajustes preestablecidos Exposici...</div>
<div class="a" style="left:1161px;top:318px;width:172px;height:22px;border:1px solid #141414;background:#d6d6d6"></div>
<svg class="a" style="left:1164px;top:323px" width="10" height="12"><path d="M1,1v10l8,-5z" fill="#888"/></svg>
<div class="t" style="left:1180px;top:324px;font-size:10px;line-height:12px;color:#111;letter-spacing:-0.05px">Ajustes preestablecidos Tono/sa...</div>

<!-- LAYERS PANEL -->
<div class="a" style="left:1017px;top:340px;width:345px;height:408px;background:#d6d6d6;border:1px solid #2c2c2c;border-radius:4px 4px 0 0"></div>
<div class="a" style="left:1018px;top:341px;width:343px;height:11px;background:linear-gradient(#5c5c5c,#3a3a3a);border-radius:3px 3px 0 0;border-bottom:1px solid #1a1a1a"></div>
<svg class="a" style="left:1330px;top:340px" width="32" height="12"><path d="M10,2l-4,4l4,4zM15,2l-4,4l4,4z" fill="#ddd"/><path d="M21,3l6,6M27,3l-6,6" stroke="#eee" stroke-width="1.5"/></svg>
<div class="a" style="left:1018px;top:352px;width:343px;height:17px;background:linear-gradient(#a2a2a2,#8c8c8c);border-bottom:1px solid #5c5c5c"></div>
<div class="a" style="left:1057px;top:352px;width:1px;height:17px;background:#5a5a5a"></div>
<div class="a" style="left:1104px;top:352px;width:1px;height:17px;background:#5a5a5a"></div>
<div class="a" style="left:1159px;top:352px;width:1px;height:17px;background:#5a5a5a"></div>
<div class="a" style="left:1018px;top:352px;width:39px;height:18px;background:linear-gradient(#f2f2f2,#d6d6d6)"></div>
<div class="t" style="left:1025px;top:354px;font-size:10.5px;line-height:13px;color:#111">Capas</div>
<div class="t" style="left:1064px;top:354px;font-size:10.5px;line-height:13px;color:#2a2a2a">Canales</div>
<div class="t" style="left:1112px;top:354px;font-size:10.5px;line-height:13px;color:#2a2a2a">Trazados</div>
<svg class="a" style="left:1342px;top:352px" width="20" height="16"><path d="M0.5,6h5l-2.5,3z" fill="#222"/><path d="M6,4.5h7M6,7.5h7M6,10.5h7M6,13.5h7" stroke="#222" stroke-width="1.2"/></svg>
<div class="a" style="left:1023px;top:373px;width:162px;height:17px;background:#fff;border-bottom:1px solid #e8e8e8"></div>
<div class="t" style="left:1026px;top:375px;font-size:10px;line-height:13px;color:#111">Normal</div>
<svg class="a" style="left:1172px;top:378px" width="12" height="8"><path d="M1.5,2h7l-3.5,4z" fill="#111"/></svg>
<div class="t" style="left:1189px;top:375px;font-size:10px;line-height:13px;color:#111">Opacidad:</div>
<div class="a" style="left:1237px;top:372px;width:53px;height:19px;border:1px solid #b8b8b8"></div><div class="a" style="left:1238px;top:373px;width:36px;height:17px;background:#fff"></div>
<div class="t" style="left:1243px;top:376px;font-size:10px;line-height:13px;color:#111">100%</div>
<div class="a" style="left:1274px;top:373px;width:15px;height:17px;background:#e4e4e4;border:1px solid #c4c4c4"></div>
<svg class="a" style="left:1274px;top:373px" width="15" height="17"><path d="M6,5.5v6l4,-3z" fill="#3a5a9a"/></svg>
<div class="a" style="left:1022px;top:393px;width:336px;height:2px;background:#a0a0a0;border-bottom:1px solid #ececec"></div>
<div class="t" style="left:1026px;top:400px;font-size:10px;line-height:13px;color:#111">Bloq.:</div>
<div class="t" style="left:1200px;top:400px;font-size:10px;line-height:13px;color:#111">Relleno:</div>
<div class="a" style="left:1237px;top:398px;width:53px;height:19px;border:1px solid #b8b8b8"></div><div class="a" style="left:1238px;top:399px;width:36px;height:17px;background:#fff"></div>
<div class="t" style="left:1243px;top:401px;font-size:10px;line-height:13px;color:#111">100%</div>
<div class="a" style="left:1274px;top:399px;width:15px;height:17px;background:#e4e4e4;border:1px solid #c4c4c4"></div>
<svg class="a" style="left:1274px;top:399px" width="15" height="17"><path d="M6,5.5v6l4,-3z" fill="#3a5a9a"/></svg>
<svg class="a" style="left:1017px;top:395px" width="345" height="353" viewBox="1017 395 345 353">
 <g><rect x="1059.5" y="401.5" width="10" height="10" fill="#fff"/><rect x="1064.5" y="401.5" width="5" height="5" fill="#cfcfcf"/><rect x="1059.5" y="406.5" width="5" height="5" fill="#cfcfcf"/></g><rect x="1059.5" y="401.5" width="10" height="10" fill="none" stroke="#666"/>
 <path d="M1078,412 q2,-4 5,-5 l5,-6 l1,1 l-5,6 q-2,3 -6,4z" fill="#ddd" stroke="#444"/>
 <path d="M1101,401v12M1095,407h12" stroke="#111" stroke-width="1.3"/><path d="M1099,403l2,-2l2,2zM1099,411l2,2l2,-2zM1097,405l-2,2l2,2zM1105,405l2,2l-2,2z" fill="#111"/>
 <rect x="1114" y="406" width="9" height="7" fill="#222"/><path d="M1115.5,406v-2a3,3 0 0 1 6,0v2" fill="none" stroke="#222" stroke-width="1.4"/>
 <path d="M1017,419.5h326M1042.5,420v268" stroke="#a0a0a0"/>
 <rect x="1343" y="420" width="15" height="306" fill="#efefef"/>
 <path d="M1347,433h8l-4,-4z" fill="#999"/><path d="M1347,716h8l-4,4z" fill="#999"/>
<rect x="1023.5" y="427" width="15" height="15" fill="#d0d0d0" stroke="#e8e8e8"/><path d="M1023.5,442v-15h15" fill="none" stroke="#b4b4b4"/><g transform="translate(1031,434.5)"><path d="M-5.8,0.5 q5.8,-6.5 11.6,0 q-5.8,5 -11.6,0z" fill="#eee"/><circle cx="0" cy="0" r="2.6" fill="#111"/><circle cx="-0.8" cy="-0.8" r="0.8" fill="#fff"/><path d="M-6,0.5 q6,-7 12,0" fill="none" stroke="#111" stroke-width="1.5"/><path d="M-5.5,1 q5.5,5 11,0" fill="none" stroke="#333" stroke-width="0.9"/><path d="M-5,-2 q5,-5 10,0" fill="none" stroke="#666" stroke-width="0.6"/></g><rect x="1046.5" y="423.5" width="31" height="24" fill="#fff" stroke="#111"/><rect x="1047" y="424" width="30" height="23" fill="#fff"/><rect x="1051" y="424" width="4" height="4" fill="#cfcfcf"/><rect x="1059" y="424" width="4" height="4" fill="#cfcfcf"/><rect x="1067" y="424" width="4" height="4" fill="#cfcfcf"/><rect x="1075" y="424" width="2" height="4" fill="#cfcfcf"/><rect x="1047" y="428" width="4" height="4" fill="#cfcfcf"/><rect x="1055" y="428" width="4" height="4" fill="#cfcfcf"/><rect x="1063" y="428" width="4" height="4" fill="#cfcfcf"/><rect x="1071" y="428" width="4" height="4" fill="#cfcfcf"/><rect x="1051" y="432" width="4" height="4" fill="#cfcfcf"/><rect x="1059" y="432" width="4" height="4" fill="#cfcfcf"/><rect x="1067" y="432" width="4" height="4" fill="#cfcfcf"/><rect x="1075" y="432" width="2" height="4" fill="#cfcfcf"/><rect x="1047" y="436" width="4" height="4" fill="#cfcfcf"/><rect x="1055" y="436" width="4" height="4" fill="#cfcfcf"/><rect x="1063" y="436" width="4" height="4" fill="#cfcfcf"/><rect x="1071" y="436" width="4" height="4" fill="#cfcfcf"/><rect x="1051" y="440" width="4" height="4" fill="#cfcfcf"/><rect x="1059" y="440" width="4" height="4" fill="#cfcfcf"/><rect x="1067" y="440" width="4" height="4" fill="#cfcfcf"/><rect x="1075" y="440" width="2" height="4" fill="#cfcfcf"/><rect x="1047" y="444" width="4" height="3" fill="#cfcfcf"/><rect x="1055" y="444" width="4" height="3" fill="#cfcfcf"/><rect x="1063" y="444" width="4" height="3" fill="#cfcfcf"/><rect x="1071" y="444" width="4" height="3" fill="#cfcfcf"/><text x="1049" y="442" font-family="Liberation Sans" font-size="13" fill="#f07a20" textLength="26" lengthAdjust="spacingAndGlyphs" font-weight="bold">MILSOLES</text><rect x="1332" y="420" width="11" height="32" fill="#cfcfcf"/><path d="M1334,439h7l-3.5,-4z" fill="#222"/><g transform="translate(1069,460.5)"><path d="M-5.8,0.5 q5.8,-6.5 11.6,0 q-5.8,5 -11.6,0z" fill="#eee"/><circle cx="0" cy="0" r="2.6" fill="#111"/><circle cx="-0.8" cy="-0.8" r="0.8" fill="#fff"/><path d="M-6,0.5 q6,-7 12,0" fill="none" stroke="#111" stroke-width="1.5"/><path d="M-5.5,1 q5.5,5 11,0" fill="none" stroke="#333" stroke-width="0.9"/><path d="M-5,-2 q5,-5 10,0" fill="none" stroke="#666" stroke-width="0.6"/></g><g transform="translate(1087,479.5)"><path d="M-5.8,0.5 q5.8,-6.5 11.6,0 q-5.8,5 -11.6,0z" fill="#eee"/><circle cx="0" cy="0" r="2.6" fill="#111"/><circle cx="-0.8" cy="-0.8" r="0.8" fill="#fff"/><path d="M-6,0.5 q6,-7 12,0" fill="none" stroke="#111" stroke-width="1.5"/><path d="M-5.5,1 q5.5,5 11,0" fill="none" stroke="#333" stroke-width="0.9"/><path d="M-5,-2 q5,-5 10,0" fill="none" stroke="#666" stroke-width="0.6"/></g><path d="M1075,471.5h268M1019,489.5h324" stroke="#a0a0a0"/><rect x="1043" y="490" width="300" height="32" fill="#3399ff"/><rect x="1332" y="490" width="11" height="32" fill="#4ea6ff"/><path d="M1334,509h7l-3.5,-4z" fill="#222"/><rect x="1023.5" y="497.5" width="15" height="15" fill="#d0d0d0" stroke="#e8e8e8"/><path d="M1023.5,512.5v-15h15" fill="none" stroke="#b4b4b4"/><g transform="translate(1031,505)"><path d="M-5.8,0.5 q5.8,-6.5 11.6,0 q-5.8,5 -11.6,0z" fill="#eee"/><circle cx="0" cy="0" r="2.6" fill="#111"/><circle cx="-0.8" cy="-0.8" r="0.8" fill="#fff"/><path d="M-6,0.5 q6,-7 12,0" fill="none" stroke="#111" stroke-width="1.5"/><path d="M-5.5,1 q5.5,5 11,0" fill="none" stroke="#333" stroke-width="0.9"/><path d="M-5,-2 q5,-5 10,0" fill="none" stroke="#666" stroke-width="0.6"/></g><rect x="1044.5" y="491.5" width="35" height="28" fill="none" stroke="#111" stroke-width="2"/><rect x="1047.5" y="494.5" width="29" height="22" fill="#fff" stroke="#fff"/><rect x="1048" y="495" width="28" height="21" fill="#fff"/><rect x="1052" y="495" width="4" height="4" fill="#cfcfcf"/><rect x="1060" y="495" width="4" height="4" fill="#cfcfcf"/><rect x="1068" y="495" width="4" height="4" fill="#cfcfcf"/><rect x="1048" y="499" width="4" height="4" fill="#cfcfcf"/><rect x="1056" y="499" width="4" height="4" fill="#cfcfcf"/><rect x="1064" y="499" width="4" height="4" fill="#cfcfcf"/><rect x="1072" y="499" width="4" height="4" fill="#cfcfcf"/><rect x="1052" y="503" width="4" height="4" fill="#cfcfcf"/><rect x="1060" y="503" width="4" height="4" fill="#cfcfcf"/><rect x="1068" y="503" width="4" height="4" fill="#cfcfcf"/><rect x="1048" y="507" width="4" height="4" fill="#cfcfcf"/><rect x="1056" y="507" width="4" height="4" fill="#cfcfcf"/><rect x="1064" y="507" width="4" height="4" fill="#cfcfcf"/><rect x="1072" y="507" width="4" height="4" fill="#cfcfcf"/><rect x="1052" y="511" width="4" height="4" fill="#cfcfcf"/><rect x="1060" y="511" width="4" height="4" fill="#cfcfcf"/><rect x="1068" y="511" width="4" height="4" fill="#cfcfcf"/><rect x="1048" y="515" width="4" height="1" fill="#cfcfcf"/><rect x="1056" y="515" width="4" height="1" fill="#cfcfcf"/><rect x="1064" y="515" width="4" height="1" fill="#cfcfcf"/><rect x="1072" y="515" width="4" height="1" fill="#cfcfcf"/><text x="1049" y="511" font-family="Liberation Sans" font-size="12" fill="#888" textLength="25" lengthAdjust="spacingAndGlyphs" font-weight="bold">MILSOLES</text><g transform="translate(1069,530.5)"><path d="M-5.8,0.5 q5.8,-6.5 11.6,0 q-5.8,5 -11.6,0z" fill="#eee"/><circle cx="0" cy="0" r="2.6" fill="#111"/><circle cx="-0.8" cy="-0.8" r="0.8" fill="#fff"/><path d="M-6,0.5 q6,-7 12,0" fill="none" stroke="#111" stroke-width="1.5"/><path d="M-5.5,1 q5.5,5 11,0" fill="none" stroke="#333" stroke-width="0.9"/><path d="M-5,-2 q5,-5 10,0" fill="none" stroke="#666" stroke-width="0.6"/></g><g transform="translate(1087,549.5)"><path d="M-5.8,0.5 q5.8,-6.5 11.6,0 q-5.8,5 -11.6,0z" fill="#eee"/><circle cx="0" cy="0" r="2.6" fill="#111"/><circle cx="-0.8" cy="-0.8" r="0.8" fill="#fff"/><path d="M-6,0.5 q6,-7 12,0" fill="none" stroke="#111" stroke-width="1.5"/><path d="M-5.5,1 q5.5,5 11,0" fill="none" stroke="#333" stroke-width="0.9"/><path d="M-5,-2 q5,-5 10,0" fill="none" stroke="#666" stroke-width="0.6"/></g><path d="M1075,541.5h268M1019,559.5h324M1019,591.5h324M1019,623.5h324M1019,655.5h324M1019,687.5h324" stroke="#a0a0a0"/><path d="M1017,726.5h341" stroke="#a0a0a0"/><rect x="1023.5" y="568" width="15" height="15" fill="#d0d0d0" stroke="#e8e8e8"/><path d="M1023.5,583v-15h15" fill="none" stroke="#b4b4b4"/><g transform="translate(1031,575.5)"><path d="M-5.8,0.5 q5.8,-6.5 11.6,0 q-5.8,5 -11.6,0z" fill="#eee"/><circle cx="0" cy="0" r="2.6" fill="#111"/><circle cx="-0.8" cy="-0.8" r="0.8" fill="#fff"/><path d="M-6,0.5 q6,-7 12,0" fill="none" stroke="#111" stroke-width="1.5"/><path d="M-5.5,1 q5.5,5 11,0" fill="none" stroke="#333" stroke-width="0.9"/><path d="M-5,-2 q5,-5 10,0" fill="none" stroke="#666" stroke-width="0.6"/></g><defs><filter id="grain" x="0" y="0" width="100%" height="100%" color-interpolation-filters="sRGB"><feTurbulence type="fractalNoise" baseFrequency="0.6" numOctaves="2" seed="3"/><feColorMatrix type="matrix" values="0.6 0.6 0 0 -0.02  0.6 0.6 0 0 -0.02  0.6 0.6 0 0 -0.02  0 0 0 0 1"/></filter></defs><rect x="1046.5" y="563.5" width="31" height="24" fill="#a8a8a8" stroke="#111"/><rect x="1047" y="564" width="30" height="23" filter="url(#grain)"/><path d="M1050,566 q6,8 2,20 M1062,565 q4,6 12,8" stroke="#666" stroke-width="2" fill="none" opacity=".5"/><defs><radialGradient id="th" cx=".5" cy=".35" r=".7"><stop offset="0" stop-color="#ff8a10"/><stop offset=".45" stop-color="#c05008"/><stop offset="1" stop-color="#000"/></radialGradient></defs><rect x="1023.5" y="600" width="15" height="15" fill="#d0d0d0" stroke="#e8e8e8"/><path d="M1023.5,615v-15h15" fill="none" stroke="#b4b4b4"/><g transform="translate(1031,607.5)"><path d="M-5.8,0.5 q5.8,-6.5 11.6,0 q-5.8,5 -11.6,0z" fill="#eee"/><circle cx="0" cy="0" r="2.6" fill="#111"/><circle cx="-0.8" cy="-0.8" r="0.8" fill="#fff"/><path d="M-6,0.5 q6,-7 12,0" fill="none" stroke="#111" stroke-width="1.5"/><path d="M-5.5,1 q5.5,5 11,0" fill="none" stroke="#333" stroke-width="0.9"/><path d="M-5,-2 q5,-5 10,0" fill="none" stroke="#666" stroke-width="0.6"/></g><rect x="1046.5" y="595.5" width="31" height="24" fill="url(#th)" stroke="#111"/><rect x="1023.5" y="632" width="15" height="15" fill="#d0d0d0" stroke="#e8e8e8"/><path d="M1023.5,647v-15h15" fill="none" stroke="#b4b4b4"/><g transform="translate(1031,639.5)"><path d="M-5.8,0.5 q5.8,-6.5 11.6,0 q-5.8,5 -11.6,0z" fill="#eee"/><circle cx="0" cy="0" r="2.6" fill="#111"/><circle cx="-0.8" cy="-0.8" r="0.8" fill="#fff"/><path d="M-6,0.5 q6,-7 12,0" fill="none" stroke="#111" stroke-width="1.5"/><path d="M-5.5,1 q5.5,5 11,0" fill="none" stroke="#333" stroke-width="0.9"/><path d="M-5,-2 q5,-5 10,0" fill="none" stroke="#666" stroke-width="0.6"/></g><rect x="1046.5" y="627.5" width="31" height="24" fill="url(#th)" stroke="#111"/><rect x="1023.5" y="664" width="15" height="15" fill="#d0d0d0" stroke="#e8e8e8"/><path d="M1023.5,679v-15h15" fill="none" stroke="#b4b4b4"/><g transform="translate(1031,671.5)"><path d="M-5.8,0.5 q5.8,-6.5 11.6,0 q-5.8,5 -11.6,0z" fill="#eee"/><circle cx="0" cy="0" r="2.6" fill="#111"/><circle cx="-0.8" cy="-0.8" r="0.8" fill="#fff"/><path d="M-6,0.5 q6,-7 12,0" fill="none" stroke="#111" stroke-width="1.5"/><path d="M-5.5,1 q5.5,5 11,0" fill="none" stroke="#333" stroke-width="0.9"/><path d="M-5,-2 q5,-5 10,0" fill="none" stroke="#666" stroke-width="0.6"/></g><rect x="1046.5" y="659.5" width="31" height="24" fill="#fff" stroke="#111"/><rect x="1318" y="671" width="8" height="6" fill="#eee" stroke="#333"/><path d="M1319.5,671v-2a2.5,2.5 0 0 1 5,0v2" fill="none" stroke="#333" stroke-width="1.2"/><text x="1314" y="441" font-family="Liberation Serif" font-size="13" font-style="italic" font-weight="bold" fill="#333">fx</text><text x="1314" y="511" font-family="Liberation Serif" font-size="13" font-style="italic" font-weight="bold" fill="#222">fx</text>
 <g transform="translate(0,0)">
 <rect x="1158.5" y="730.5" width="9" height="6" rx="3" fill="none" stroke="#555" stroke-width="1.3"/><rect x="1166.5" y="730.5" width="9" height="6" rx="3" fill="none" stroke="#555" stroke-width="1.3"/>
 <text x="1188" y="738" font-family="Liberation Serif" font-size="12" font-style="italic" font-weight="bold" fill="#222">fx</text><path d="M1202,739h3l-1.5,2z" fill="#222"/>
 <rect x="1215.5" y="728.5" width="13" height="11" fill="#bbb" stroke="#333"/><circle cx="1222" cy="734" r="3.5" fill="#fff" stroke="#333"/>
 <circle cx="1249" cy="734" r="5.5" fill="#fff" stroke="#222"/><path d="M1249,728.5a5.5,5.5 0 0 0 0,11z" fill="#222" transform="rotate(40 1249 734)"/><path d="M1256,739h3l-1.5,2z" fill="#222"/>
 <path d="M1270.5,730.5h4l1,1h6v7h-11z" fill="#eee" stroke="#333"/>
 <rect x="1298.5" y="729.5" width="9" height="9" fill="#eee" stroke="#333"/><path d="M1301,736h4v-4" fill="none" stroke="#333"/>
 <path d="M1325,730.5h9M1326.5,731v8h6v-8" fill="#eee" stroke="#333"/><path d="M1328,728.5h3" stroke="#333"/>
 <g fill="#888"><rect x="1356" y="741" width="1" height="1"/><rect x="1353" y="744" width="1" height="1"/><rect x="1356" y="744" width="1" height="1"/><rect x="1350" y="744" width="1" height="1"/><rect x="1353" y="741" width="1" height="1"/><rect x="1356" y="738" width="1" height="1"/></g>
 </g>
</svg>
<div class="t" style="left:1086px;top:430px;font-size:10px;line-height:13px;color:#111;">MIL SOLES</div>
<div class="t" style="left:1080px;top:454px;font-size:10px;line-height:13px;color:#111;">Efectos</div>
<div class="t" style="left:1098px;top:473px;font-size:10px;line-height:13px;color:#111;">Bisel y relieve</div>
<div class="t" style="left:1086px;top:500px;font-size:10px;line-height:13px;color:#fff;font-weight:bold;">MIL SOLES copia</div>
<div class="t" style="left:1080px;top:524px;font-size:10px;line-height:13px;color:#111;">Efectos</div>
<div class="t" style="left:1098px;top:543px;font-size:10px;line-height:13px;color:#111;">Bisel y relieve</div>
<div class="t" style="left:1086px;top:570px;font-size:10px;line-height:13px;color:#111;">Capa 2</div>
<div class="t" style="left:1086px;top:602px;font-size:10px;line-height:13px;color:#111;">Capa 1 copia</div>
<div class="t" style="left:1086px;top:634px;font-size:10px;line-height:13px;color:#111;">Capa 1</div>
<div class="t" style="left:1086px;top:666px;font-size:10px;line-height:13px;color:#111;font-style:italic;">Fondo</div>

<!-- BOTTOM WINDOW EDGE -->
<div class="a" style="left:0;top:0;width:1px;height:766px;background:#707070"></div>
<div class="a" style="left:1px;top:1px;width:1px;height:765px;background:#f4f4f4"></div>
<div class="a" style="left:1362px;top:0;width:4px;height:766px;background:#e8e8e8;border-left:1px solid #f4f4f4"></div>
<div class="a" style="left:1364px;top:0;width:1px;height:766px;background:#9a9a9a"></div>
<div class="a" style="left:0;top:762px;width:1366px;height:1px;background:#3c3c3c"></div>
<div class="a" style="left:1px;top:763px;width:1364px;height:3px;background:#f0f0f0"></div>
<div class="a" style="left:0;top:766px;width:1366px;height:2px;background:#c8d8e8;border-top:1px solid #8aa0b8"></div>
<div class="a" style="left:76px;top:766px;width:60px;height:2px;background:#fafafa;border-top:1px solid #2a2a2a"></div>
<div class="a" style="left:138px;top:766px;width:60px;height:2px;background:#fafafa;border-top:1px solid #2a2a2a"></div>
<div class="a" style="left:200px;top:766px;width:57px;height:2px;background:#fafafa;border-top:1px solid #2a2a2a"></div>
<div class="a" style="left:259px;top:766px;width:64px;height:2px;background:#dce8f4;border-top:1px solid #2a2a2a"></div>
<div class="a" style="left:325px;top:766px;width:59px;height:2px;background:#fafafa;border-top:1px solid #2a2a2a"></div>
<div class="a" style="left:386px;top:766px;width:58px;height:2px;background:#fafafa;border-top:1px solid #2a2a2a"></div>

</body></html>
